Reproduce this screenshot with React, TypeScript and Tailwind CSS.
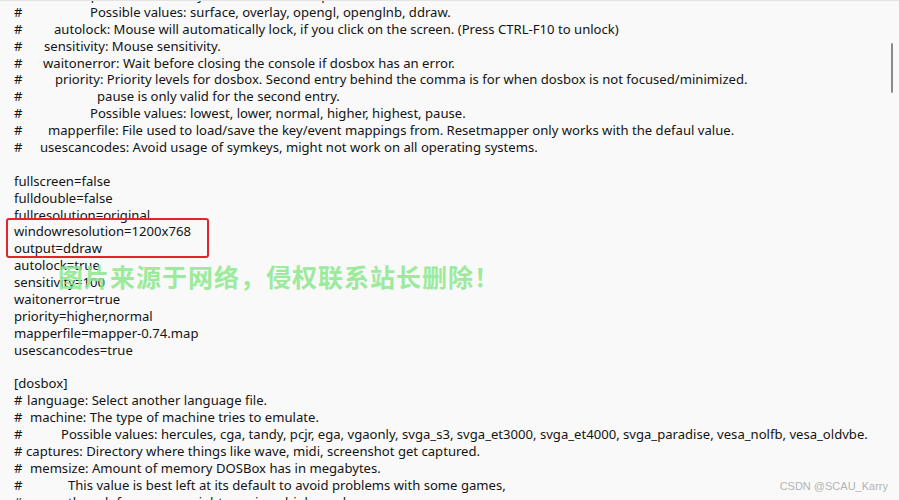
type Line = { hash?: boolean; pad: string; text: string };

// indent classes are the width of the "#" column up to where the text starts
const header: Line[] = [
  { hash: true, pad: "w-[56px]", text: "output: What video system to use for output." },
  { hash: true, pad: "w-[76px]", text: "Possible values: surface, overlay, opengl, openglnb, ddraw." },
  { hash: true, pad: "w-[40px]", text: "autolock: Mouse will automatically lock, if you click on the screen. (Press CTRL-F10 to unlock)" },
  { hash: true, pad: "w-[30px]", text: "sensitivity: Mouse sensitivity." },
  { hash: true, pad: "w-[29px]", text: "waitonerror: Wait before closing the console if dosbox has an error." },
  { hash: true, pad: "w-[41px]", text: "priority: Priority levels for dosbox. Second entry behind the comma is for when dosbox is not focused/minimized." },
  { hash: true, pad: "w-[83px]", text: "pause is only valid for the second entry." },
  { hash: true, pad: "w-[76px]", text: "Possible values: lowest, lower, normal, higher, highest, pause." },
  { hash: true, pad: "w-[34px]", text: "mapperfile: File used to load/save the key/event mappings from. Resetmapper only works with the defaul value." },
  { hash: true, pad: "w-[26px]", text: "usescancodes: Avoid usage of symkeys, might not work on all operating systems." },
];

const dosbox: Line[] = [
  { pad: "w-0", text: "[dosbox]" },
  { hash: true, pad: "w-[13px]", text: "language: Select another language file." },
  { hash: true, pad: "w-[16px]", text: "machine: The type of machine tries to emulate." },
  { hash: true, pad: "w-[47px]", text: "Possible values: hercules, cga, tandy, pcjr, ega, vgaonly, svga_s3, svga_et3000, svga_et4000, svga_paradise, vesa_nolfb, vesa_oldvbe." },
  { hash: true, pad: "w-[12px]", text: "captures: Directory where things like wave, midi, screenshot get captured." },
  { hash: true, pad: "w-[16px]", text: "memsize: Amount of memory DOSBox has in megabytes." },
  { hash: true, pad: "w-[54px]", text: "This value is best left at its default to avoid problems with some games," },
  { hash: true, pad: "w-[54px]", text: "though few games might require a higher value." },
];

function Row({ line }: { line: Line }) {
  return (
    <div className="flex h-[16.9px] items-center whitespace-nowrap pl-[14px]">
      <span className={`shrink-0 ${line.pad}`}>{line.hash ? "#" : ""}</span>
      <span>{line.text}</span>
    </div>
  );
}

function Setting({ text }: { text: string }) {
  return <div className="h-[16.9px] whitespace-nowrap pl-[14px] leading-[16.9px]">{text}</div>;
}

export default function App() {
  return (
    <div className="relative h-[500px] w-[899px] overflow-hidden border-t border-[#e4e4e4] bg-[#f9f9f9] font-['Noto_Sans',sans-serif] text-[13.1px] leading-[16.9px] text-[#141414]">
      <div className="-mt-[14px] flex flex-col">
        {header.map((l, i) => (
          <Row key={i} line={l} />
        ))}
        <div className="h-[16.9px]" />
        <Setting text="fullscreen=false" />
        <Setting text="fulldouble=false" />
        <Setting text="fullresolution=original" />
        <div className="relative">
          <Setting text="windowresolution=1200x768" />
          <Setting text="output=ddraw" />
          <div className="absolute -top-[5px] -bottom-[1px] left-[6px] w-[203px] rounded-[3px] border-2 border-[#e0262b]" />
        </div>
        <Setting text="autolock=true" />
        <Setting text="sensitivity=100" />
        <Setting text="waitonerror=true" />
        <Setting text="priority=higher,normal" />
        <Setting text="mapperfile=mapper-0.74.map" />
        <Setting text="usescancodes=true" />
        <div className="h-[16.9px]" />
        {dosbox.map((l, i) => (
          <Row key={i} line={l} />
        ))}
      </div>

      {/* scrollbar thumb */}
      <div className="absolute right-[6px] top-[42px] h-[50px] w-[2px] rounded-full bg-[#8a8a8a]" />

      {/* green watermark */}
      <div className="absolute left-[58px] top-[261px] font-['Noto_Sans_CJK_SC',sans-serif] text-[25px] font-bold leading-[28px] tracking-[1px] text-[#8ce88c] opacity-85">
        图片来源于网络，侵权联系站长删除！
      </div>

      <div className="absolute bottom-[5px] right-[11px] font-['Liberation_Sans',sans-serif] text-[11px] text-[#b4b4b4]">
        CSDN @SCAU_Karry
      </div>
    </div>
  );
}
